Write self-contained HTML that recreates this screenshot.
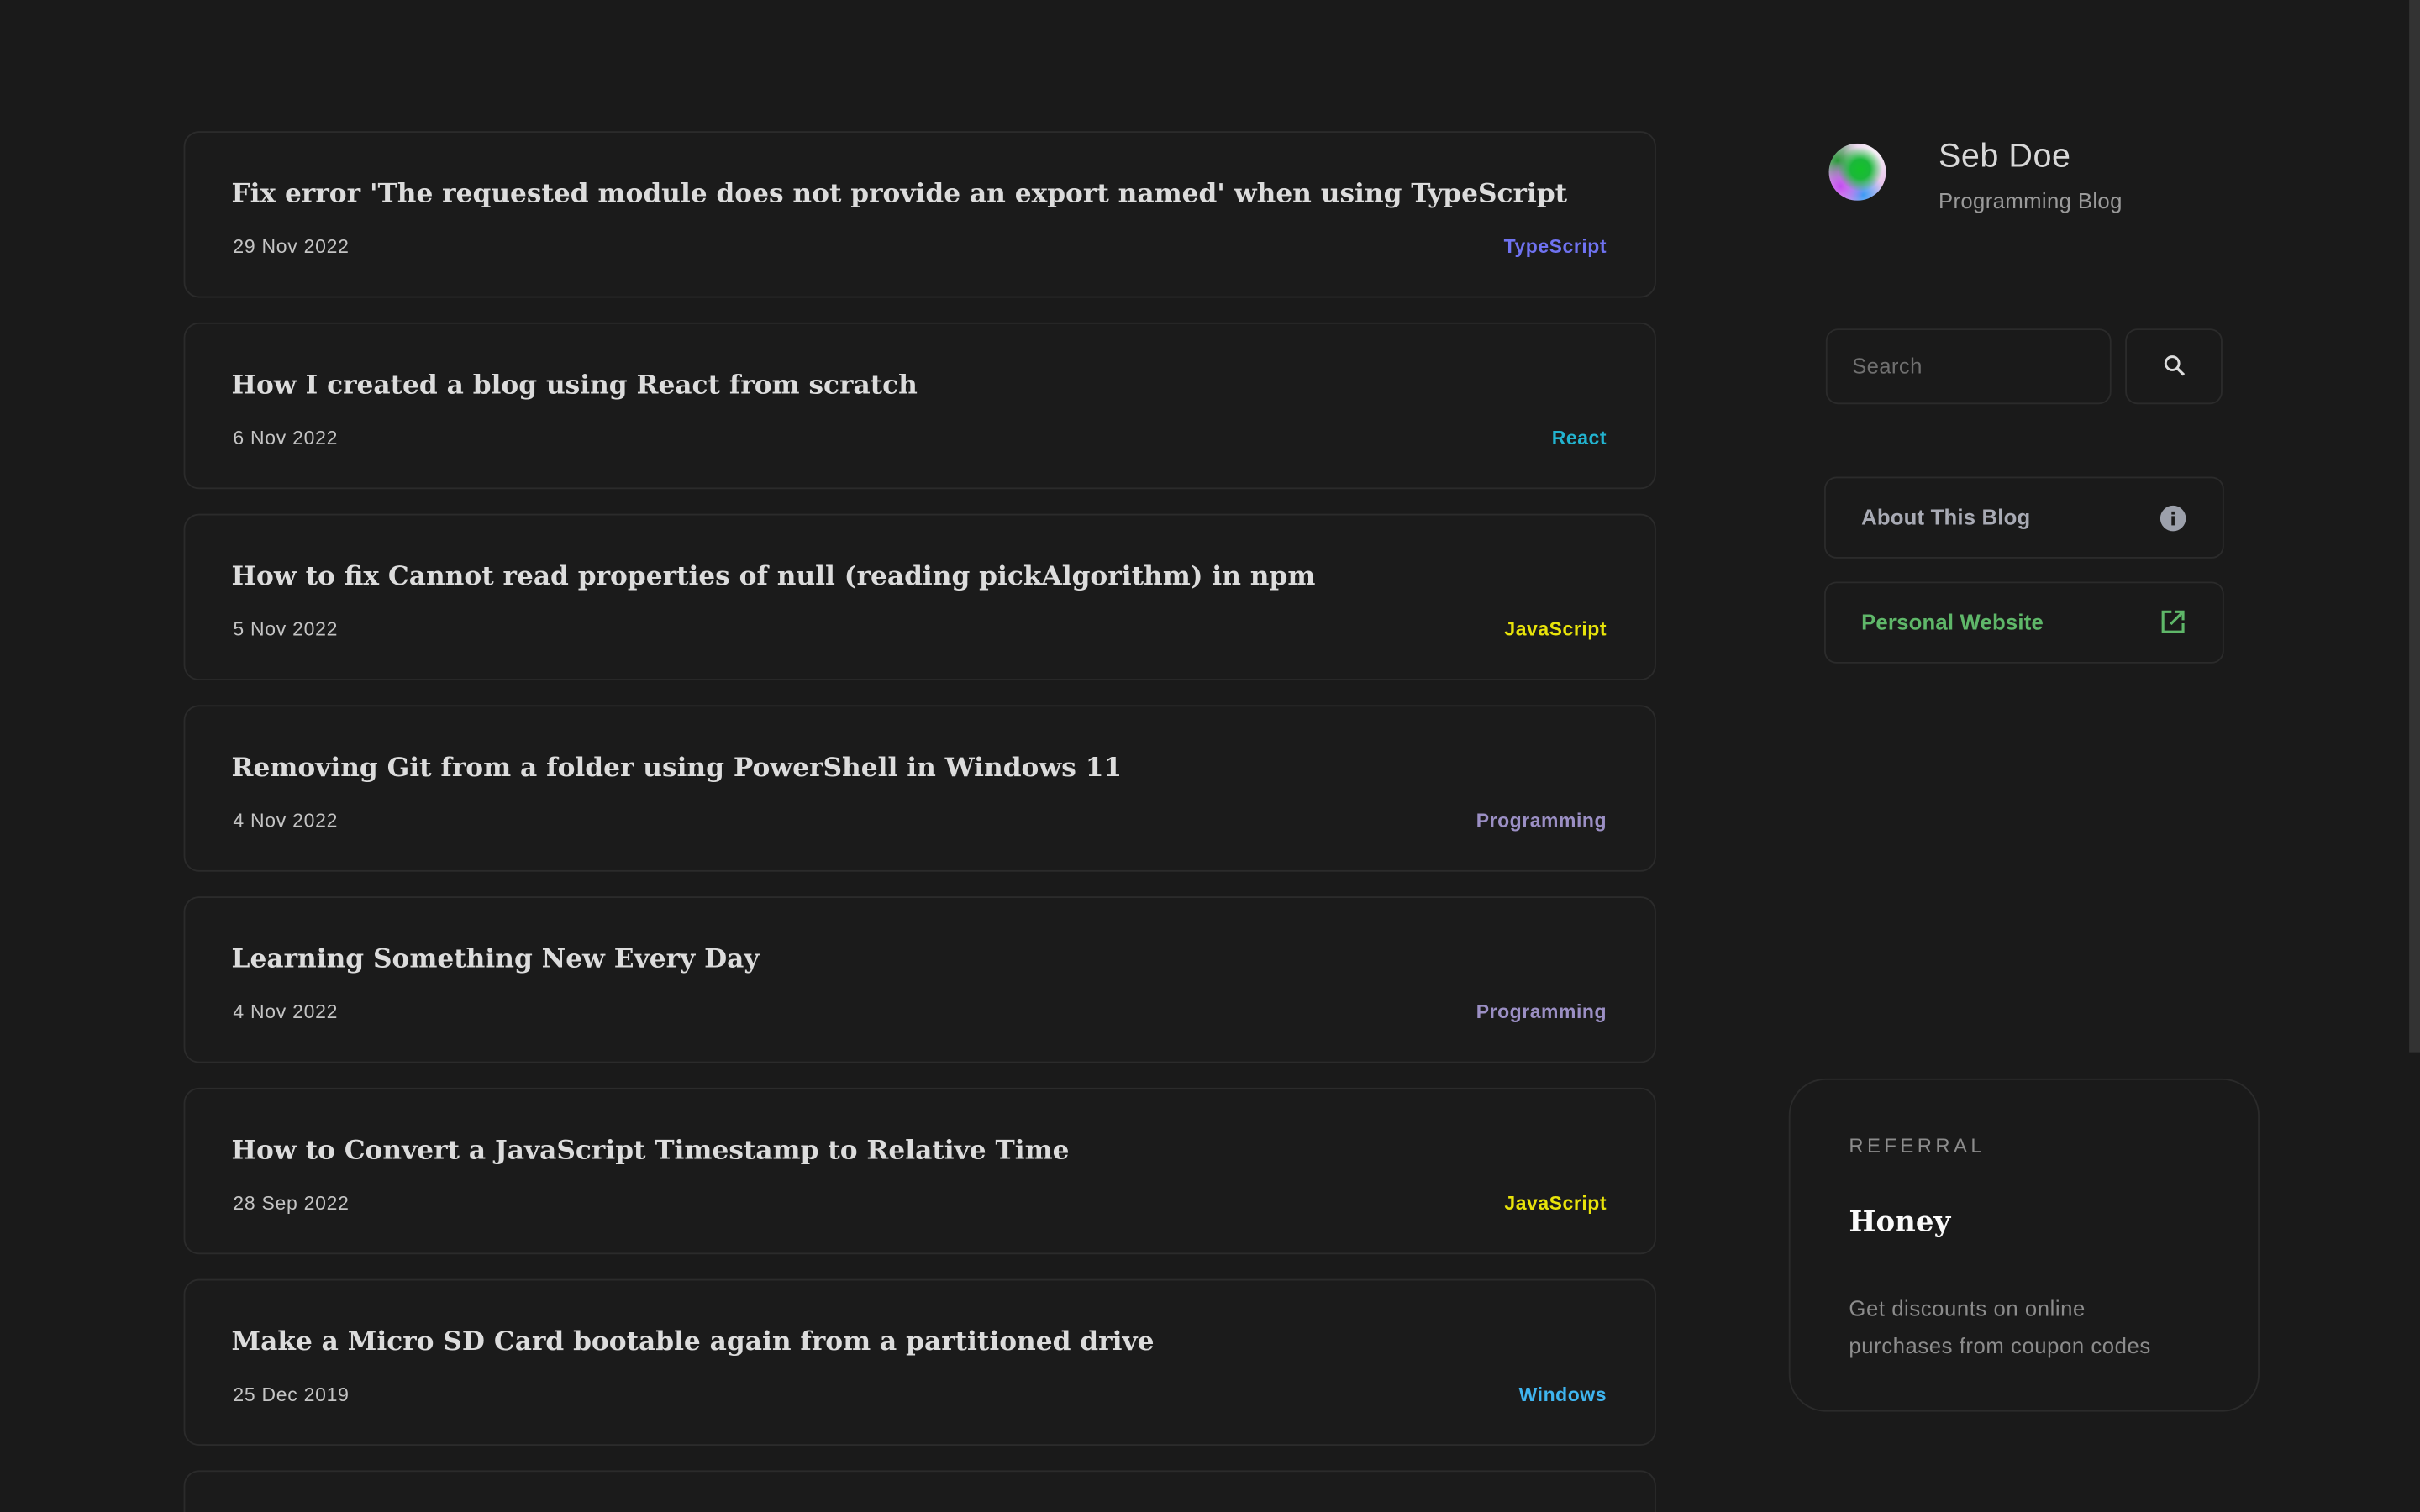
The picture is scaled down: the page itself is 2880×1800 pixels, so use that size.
<!DOCTYPE html>
<html><head><meta charset="utf-8"><style>
html,body{margin:0;padding:0;background:#1a1a1a;width:2880px;height:1800px;overflow:hidden}
#w{position:absolute;left:0;top:0;width:1568px;height:980px;overflow:hidden;transform:scale(1.836735);transform-origin:0 0;font-family:"Liberation Sans",sans-serif}
.card{position:absolute;left:119px;width:952px;height:106px;border:1px solid #2b2b2b;border-radius:10px;background:#1b1b1b}
.t{position:absolute;left:30px;top:26px;font-family:"DejaVu Serif","Liberation Serif",serif;font-weight:bold;font-size:17px;color:#dcdcdc;white-space:nowrap;line-height:28px}
.d{position:absolute;left:31px;top:66px;font-size:12.5px;color:#c4c4c4;letter-spacing:.4px;line-height:16px}
.g{position:absolute;right:31px;top:66px;font-size:12.5px;font-weight:bold;letter-spacing:.3px;line-height:16px}
.box{position:absolute;border:1px solid #2b2b2b;border-radius:8px}
</style></head><body><div id="w">
<div class="card" style="top:85px"><div class="t">Fix error 'The requested module does not provide an export named' when using TypeScript</div><div class="d">29 Nov 2022</div><div class="g" style="color:#6f72f0">TypeScript</div></div>
<div class="card" style="top:209px"><div class="t">How I created a blog using React from scratch</div><div class="d">6 Nov 2022</div><div class="g" style="color:#22b3cf">React</div></div>
<div class="card" style="top:333px"><div class="t">How to fix Cannot read properties of null (reading pickAlgorithm) in npm</div><div class="d">5 Nov 2022</div><div class="g" style="color:#e8e30a">JavaScript</div></div>
<div class="card" style="top:457px"><div class="t">Removing Git from a folder using PowerShell in Windows 11</div><div class="d">4 Nov 2022</div><div class="g" style="color:#9b8fc4">Programming</div></div>
<div class="card" style="top:581px"><div class="t">Learning Something New Every Day</div><div class="d">4 Nov 2022</div><div class="g" style="color:#9b8fc4">Programming</div></div>
<div class="card" style="top:705px"><div class="t">How to Convert a JavaScript Timestamp to Relative Time</div><div class="d">28 Sep 2022</div><div class="g" style="color:#e8e30a">JavaScript</div></div>
<div class="card" style="top:829px"><div class="t">Make a Micro SD Card bootable again from a partitioned drive</div><div class="d">25 Dec 2019</div><div class="g" style="color:#3fb4ef">Windows</div></div>
<div class="card" style="top:953px"></div>

<div style="position:absolute;left:1185px;top:93px;width:37px;height:37px;border-radius:50%;background:radial-gradient(circle at 55% 45%,#14c22a 0,#1bb83a 22%,transparent 50%),radial-gradient(circle at 20% 75%,#c24cf0 0,transparent 40%),radial-gradient(circle at 60% 90%,#3a9cf5 0,transparent 35%),radial-gradient(circle at 75% 20%,#f6f6f6 0,transparent 45%),radial-gradient(circle at 15% 30%,#2a9a3a 0,transparent 40%),#e9c6ec"></div>
<div style="position:absolute;left:1256px;top:89px;font-size:21.5px;color:#d8d8d8;letter-spacing:.3px">Seb Doe</div>
<div style="position:absolute;left:1256px;top:122px;font-size:14px;color:#9a9a9a;letter-spacing:.2px">Programming Blog</div>

<div class="box" style="left:1183px;top:213px;width:183px;height:47px"><span style="position:absolute;left:16px;top:15px;font-size:14px;color:#6f6f6f;letter-spacing:.2px">Search</span></div>
<div class="box" style="left:1377px;top:213px;width:61px;height:47px"><svg style="position:absolute;left:23px;top:15px" width="16" height="16" viewBox="0 0 16 16"><circle cx="6.5" cy="6.5" r="4.3" fill="none" stroke="#ddd" stroke-width="1.6"/><path d="M9.7 9.7L14 14" stroke="#ddd" stroke-width="1.8"/></svg></div>

<div class="box" style="left:1182px;top:309px;width:257px;height:51px"><span style="position:absolute;left:23px;top:17px;font-size:14px;font-weight:bold;color:#a8aab4;letter-spacing:.1px">About This Blog</span><svg style="position:absolute;left:216px;top:17px" width="18" height="18" viewBox="0 0 18 18"><circle cx="9" cy="9" r="8.3" fill="#9ca0ab"/><rect x="8" y="7.5" width="2" height="6" fill="#1b1b1b"/><rect x="8" y="4.5" width="2" height="2" fill="#1b1b1b"/></svg></div>
<div class="box" style="left:1182px;top:377px;width:257px;height:51px"><span style="position:absolute;left:23px;top:17px;font-size:14px;font-weight:bold;color:#5fb769;letter-spacing:.1px">Personal Website</span><svg style="position:absolute;left:217px;top:17px" width="16" height="16" viewBox="0 0 16 16" fill="none" stroke="#5fb769" stroke-width="1.7"><path d="M7 1.5H1.5v13h13V9"/><path d="M9 1.5h5.5V7M14.5 1.5L6.5 9.5"/></svg></div>

<div style="position:absolute;left:1159px;top:699px;width:303px;height:214px;border:1px solid #2b2b2b;border-radius:24px">
<div style="position:absolute;left:38px;top:35px;font-size:13px;letter-spacing:2.4px;color:#8c8c8c">REFERRAL</div>
<div style="position:absolute;left:38px;top:82px;font-family:'DejaVu Serif','Liberation Serif',serif;font-weight:bold;font-size:18.5px;color:#fafafa">Honey</div>
<div style="position:absolute;left:38px;top:136px;font-size:14px;line-height:24px;color:#8c8c8c;letter-spacing:.3px;width:215px">Get discounts on online purchases from coupon codes</div>
</div>
<div style="position:absolute;left:1561px;top:0;width:7px;height:682px;background:#333"></div>
</div></body></html>
